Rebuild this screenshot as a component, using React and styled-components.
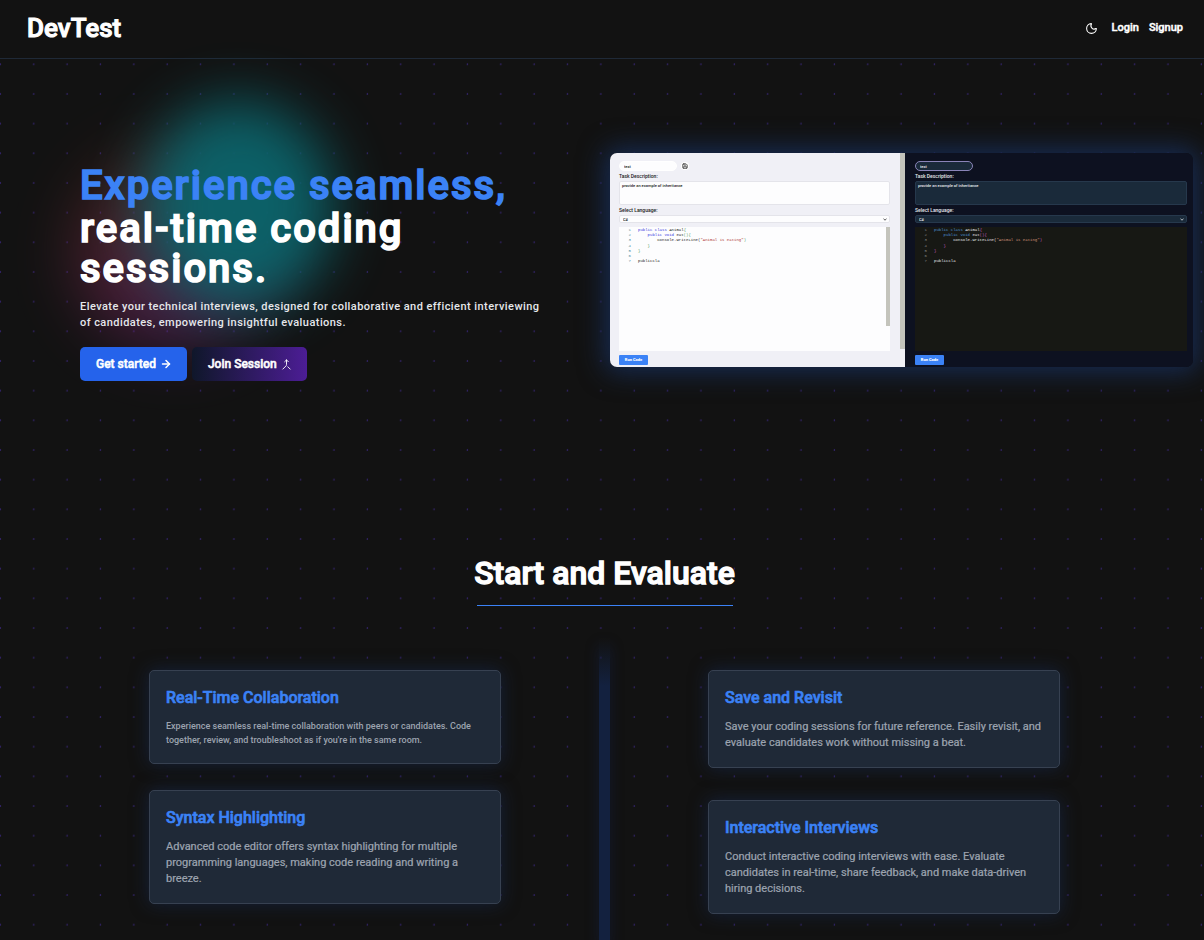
import React from "react";
import styled, { createGlobalStyle, css } from "styled-components";
import { Moon, ArrowRight, Merge, Save } from "lucide-react";

const GlobalStyle = createGlobalStyle`
  *, *::before, *::after { box-sizing: border-box; }
  body {
    margin: 0;
    background: #121212;
    color: #fff;
    font-family: Roboto, "Liberation Sans", sans-serif;
    font-weight: 500;
  }
  h1, h2, h3, p { margin: 0; }
  a { color: inherit; text-decoration: none; }
`;

const strong = css`
  font-weight: 500;
  -webkit-text-stroke: 0.04em currentColor;
`;

const Page = styled.div`
  position: relative;
  display: flex;
  flex-direction: column;
  min-height: 100vh;
  overflow: hidden;
`;

const DotField = styled.svg`
  position: absolute;
  inset: 0;
  width: 100%;
  height: 100%;
  pointer-events: none;
`;

const Header = styled.header`
  position: relative;
  display: flex;
  align-items: center;
  justify-content: space-between;
  height: 59px;
  padding: 0 21px 2px 27px;
  background: #121212;
  border-bottom: 1px solid #1f2937;
`;

const Logo = styled.a`
  ${strong}
  font-size: 26px;
  line-height: 32px;
`;

const Nav = styled.nav`
  display: flex;
  align-items: center;
  gap: 10px;
  font-size: 11px;
  line-height: 16px;
  ${strong}
`;

const ThemeButton = styled.button`
  display: flex;
  padding: 0 4px 0 0;
  border: 0;
  background: none;
  color: #fff;
`;

const Hero = styled.section`
  display: grid;
  grid-template-columns: 1fr 1fr;
  align-items: start;
  min-height: 492px;
`;

const Pitch = styled.div`
  position: relative;
  padding: 104px 20px 0 80px;
`;

const Glow = styled.div`
  position: absolute;
  border-radius: 50%;
`;

const RoseGlow = styled(Glow)`
  left: 76px;
  top: 92px;
  width: 196px;
  height: 196px;
  background: linear-gradient(160deg, #7c3a22 10%, #a8326e 55%, #6d28a9);
  opacity: 0.42;
  filter: blur(32px);
`;

const TealGlow = styled(Glow)`
  left: 142px;
  top: 42px;
  width: 192px;
  height: 210px;
  background: #0b646b;
  opacity: 0.95;
  filter: blur(28px);
`;

const Headline = styled.h1`
  position: relative;
  font-size: 40px;
  line-height: 40px;
  letter-spacing: 0.05em;
  ${strong}
`;

const Accent = styled.span`
  display: block;
  color: #3b82f6;
  line-height: 46px;
`;

const Lead = styled.p`
  position: relative;
  max-width: 464px;
  margin-top: 10px;
  font-size: 11px;
  line-height: 16px;
  color: #e5e7eb;
  letter-spacing: 0.04em;
`;

const Actions = styled.div`
  position: relative;
  display: flex;
  gap: 5px;
  margin-top: 16px;
`;

const ActionButton = styled.button`
  display: flex;
  align-items: center;
  gap: 4px;
  height: 34px;
  padding: 0 15px 0 16px;
  border: 0;
  border-radius: 5px;
  color: #fff;
  font: 500 12px/16px Roboto, "Liberation Sans", sans-serif;
  ${strong}
  background: ${(p) => (p.$violet ? "linear-gradient(90deg, #0f172a, #4c1d95)" : "#2563eb")};
`;

const Preview = styled.div`
  position: relative;
  padding: 94px 11px 0 8px;
`;

const Shot = styled.div`
  display: grid;
  grid-template-columns: 295fr 288fr;
  border-radius: 7px;
  overflow: hidden;
  box-shadow: 0 0 27px 5px #172c54;
`;

const shotThemes = {
  light: css`
    --bg: #f0f0f6; --field: #fdfdfe; --line: #e4e4ea; --text: #222; --code-bg: #fdfdfe;
    --kw: #3a3ae0; --num: #4d8ba0; --str: #b03a3a; --br: #4d9a5d; --pad: 8px 10px 2px 9px;
  `,
  dark: css`
    --bg: #0d1120; --field: #1a2a3a; --line: #26384c; --text: #e5e7eb; --code-bg: #171814;
    --kw: #4b8fd0; --num: #858585; --str: #ce9178; --br: #c85fc0; --pad: 8px 6px 2px 10px;
  `,
};

const Panel = styled.div`
  ${(p) => shotThemes[p.$theme]}
  display: flex;
  background: var(--bg);
  color: var(--text);
`;

const PanelBody = styled.div`
  display: flex;
  flex: 1;
  flex-direction: column;
  min-width: 0;
  padding: var(--pad);
`;

const fieldStyle = css`
  display: block;
  margin: 0;
  border: 1px solid var(--line);
  background: var(--field);
  color: var(--text);
  font: 500 4px/5px Roboto, sans-serif;
  outline: none;
`;

const TitleRow = styled.div`
  display: flex;
  align-items: center;
  gap: 4px;
`;

const TitleInput = styled.input`
  ${fieldStyle}
  width: 58px;
  height: 10px;
  padding: 0 4px;
  border-radius: 5px;
  border-color: ${(p) => (p.$outlined ? "#8a84b8" : "#fff")};
`;

const SaveButton = styled.button`
  display: flex;
  padding: 1px;
  border: 0;
  border-radius: 4px;
  background: #fff;
  color: #333;
`;

const FieldLabel = styled.label`
  margin: 3px 0 2px;
  font-size: 5px;
  line-height: 5px;
`;

const Task = styled.textarea`
  ${fieldStyle}
  width: 100%;
  height: 24px;
  padding: 1px 2px;
  border-radius: 2px;
  resize: none;
`;

const SelectWrap = styled.div`
  display: flex;
  align-items: center;
  justify-content: space-between;
  height: 8px;
  padding-right: 2px;
  border: 1px solid var(--line);
  border-radius: 2px;
  background: var(--field);
`;

const Language = styled.select`
  ${fieldStyle}
  flex: 1;
  height: 6px;
  padding: 0 3px;
  border: 0;
  background: none;
  appearance: none;
`;

const Editor = styled.div`
  display: flex;
  height: 124px;
  margin: 4px 0;
  background: var(--code-bg);
`;

const Code = styled.ol`
  flex: 1;
  margin: 0;
  padding: 1px 0 0;
  list-style: none;
  font: 400 4px/1.3 "Liberation Mono", monospace;
`;

const CodeLine = styled.li`
  display: grid;
  grid-template-columns: 12px 1fr;
  gap: 7px;
  white-space: pre;
`;

const LineNo = styled.span`
  color: var(--num);
  text-align: right;
`;

const Token = styled.span`
  color: ${(p) => `var(--${p.$kind})`};
`;

const Thumb = styled.div`
  width: ${(p) => p.$width}px;
  height: ${(p) => p.$height}px;
  background: #c4c4bc;
`;

const RunButton = styled.button`
  align-self: flex-start;
  width: 29px;
  height: 10px;
  padding: 0;
  border: 0;
  border-radius: 1px;
  background: #3b82f6;
  color: #fff;
  font: 900 4px/10px Roboto, sans-serif;
`;

const Features = styled.section`
  position: relative;
  display: flex;
  flex: 1;
  flex-direction: column;
  padding-left: 5px;
`;

const SectionTitle = styled.h2`
  align-self: center;
  width: 256px;
  padding-bottom: 10px;
  border-bottom: 1px solid #3b82f6;
  display: flex;
  justify-content: center;
  white-space: nowrap;
  font-size: 32px;
  line-height: 44px;
  ${strong}
`;

const FeatureGrid = styled.div`
  display: grid;
  grid-template-columns: 1fr 11px 1fr;
  column-gap: 98px;
  flex: 1;
  width: 100%;
  max-width: 911px;
  margin: 32px auto 0;
`;

const FeatureColumn = styled.div`
  display: flex;
  flex-direction: column;
  gap: ${(p) => p.$gap}px;
  padding: 32px 0 24px;
`;

const Beam = styled.div`
  background: linear-gradient(180deg, transparent, #13213f 48px);
  box-shadow: 0 8px 14px rgba(23, 37, 84, 0.4);
`;

const Card = styled.article`
  padding: 16px;
  border: 1px solid #374151;
  border-radius: 5px;
  background: #1f2937;
  box-shadow: 0 0 18px rgba(23, 44, 84, 0.6);
`;

const CardTitle = styled.h3`
  margin-bottom: 10px;
  color: #3b82f6;
  font-size: 16px;
  line-height: 22px;
  ${strong}
`;

const CardText = styled.p`
  color: #9ca3af;
  font-weight: 400;
  -webkit-text-stroke: 0.02em currentColor;
  font-size: 11px;
  line-height: 16px;
`;

const SmallCardText = styled(CardText)`
  font-weight: 500;
  -webkit-text-stroke: 0;
  font-size: 9px;
  line-height: 14px;
`;

const codeLines = [
  [["kw", "public class "], ["text", "Animal"], ["br", "{"]],
  [["kw", "    public void "], ["text", "eat"], ["br", "(){"]],
  [["text", "        Console.WriteLine("], ["str", '"Animal is eating"'], ["br", ")"]],
  [["br", "    }"]],
  [["br", "}"]],
  [["text", " "]],
  [["text", "publiccla"]],
];

function EditorPanel({ theme }) {
  const light = theme === "light";
  return (
    <Panel $theme={theme}>
      <PanelBody>
        <TitleRow>
          <TitleInput aria-label="Session title" defaultValue="test" $outlined={!light} />
          {light && (
            <SaveButton aria-label="Save">
              <Save size={6} strokeWidth={3} />
            </SaveButton>
          )}
        </TitleRow>
        <FieldLabel htmlFor={`${theme}-task`}>Task Description:</FieldLabel>
        <Task id={`${theme}-task`} defaultValue="provide an example of inheritance" />
        <FieldLabel htmlFor={`${theme}-language`}>Select Language:</FieldLabel>
        <SelectWrap>
          <Language id={`${theme}-language`}>
            <option>C#</option>
          </Language>
          <svg width="4" height="3" viewBox="0 0 4 3" aria-hidden="true">
            <path d="M0.5 0.8 2 2.2 3.5 0.8" fill="none" stroke="currentColor" strokeWidth="0.8" />
          </svg>
        </SelectWrap>
        <Editor>
          <Code>
            {codeLines.map((tokens, i) => (
              <CodeLine key={i}>
                <LineNo>{i + 1}</LineNo>
                <span>
                  {tokens.map(([kind, text], j) => (
                    <Token key={j} $kind={kind}>{text}</Token>
                  ))}
                </span>
              </CodeLine>
            ))}
          </Code>
          {light && <Thumb $width={4} $height={99} />}
        </Editor>
        <RunButton>Run Code</RunButton>
      </PanelBody>
      {light && <Thumb $width={5} $height={196} />}
    </Panel>
  );
}

function Feature({ title, small, children }) {
  const Text = small ? SmallCardText : CardText;
  return (
    <Card>
      <CardTitle>{title}</CardTitle>
      <Text>{children}</Text>
    </Card>
  );
}

export default function App() {
  return (
    <>
      <GlobalStyle />
      <Page>
        <DotField aria-hidden="true">
          <defs>
            <pattern id="dots" width="33.36" height="29.67" patternUnits="userSpaceOnUse" y="49.4">
              <circle cx="0.4" cy="14.9" r="0.7" fill="#402a90" />
              <circle cx="33.76" cy="14.9" r="0.7" fill="#402a90" />
            </pattern>
          </defs>
          <rect width="100%" height="100%" fill="url(#dots)" />
        </DotField>
        <Header>
          <Logo href="#">DevTest</Logo>
          <Nav>
            <ThemeButton aria-label="Toggle theme">
              <Moon size={13} />
            </ThemeButton>
            <a href="#login">Login</a>
            <a href="#signup">Signup</a>
          </Nav>
        </Header>
        <Hero>
          <Pitch>
            <RoseGlow />
            <TealGlow />
            <Headline>
              <Accent>Experience seamless,</Accent>
              real-time coding sessions.
            </Headline>
            <Lead>
              Elevate your technical interviews, designed for collaborative and efficient
              interviewing of candidates, empowering insightful evaluations.
            </Lead>
            <Actions>
              <ActionButton>
                Get started <ArrowRight size={12} strokeWidth={3} />
              </ActionButton>
              <ActionButton $violet>
                Join Session <Merge size={11} />
              </ActionButton>
            </Actions>
          </Pitch>
          <Preview>
            <Shot>
              <EditorPanel theme="light" />
              <EditorPanel theme="dark" />
            </Shot>
          </Preview>
        </Hero>
        <Features>
          <SectionTitle>Start and Evaluate</SectionTitle>
          <FeatureGrid>
            <FeatureColumn $gap={26}>
              <Feature title="Real-Time Collaboration" small>
                Experience seamless real-time collaboration with peers or candidates. Code
                together, review, and troubleshoot as if you're in the same room.
              </Feature>
              <Feature title="Syntax Highlighting">
                Advanced code editor offers syntax highlighting for multiple programming
                languages, making code reading and writing a breeze.
              </Feature>
            </FeatureColumn>
            <Beam />
            <FeatureColumn $gap={32}>
              <Feature title="Save and Revisit">
                Save your coding sessions for future reference. Easily revisit, and evaluate
                candidates work without missing a beat.
              </Feature>
              <Feature title="Interactive Interviews">
                Conduct interactive coding interviews with ease. Evaluate candidates in
                real-time, share feedback, and make data-driven hiring decisions.
              </Feature>
            </FeatureColumn>
          </FeatureGrid>
        </Features>
      </Page>
    </>
  );
}
